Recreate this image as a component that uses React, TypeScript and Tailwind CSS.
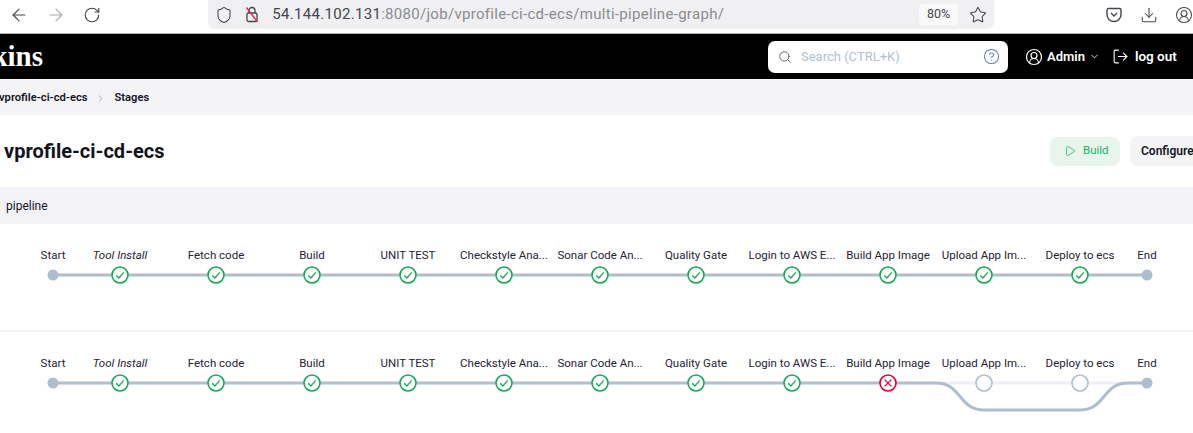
import { ArrowLeft, ArrowRight, ChevronDown, ChevronRight, CircleHelp, CircleUserRound, Download, LogOut, Play, RotateCw, Search, Shield, Star } from "lucide-react";

const stages = [
  { name: "Tool Install", x: 120, italic: true },
  { name: "Fetch code", x: 216 },
  { name: "Build", x: 312 },
  { name: "UNIT TEST", x: 408 },
  { name: "Checkstyle Ana...", x: 504 },
  { name: "Sonar Code An...", x: 600 },
  { name: "Quality Gate", x: 696 },
  { name: "Login to AWS E...", x: 792 },
  { name: "Build App Image", x: 888 },
  { name: "Upload App Im...", x: 984 },
  { name: "Deploy to ecs", x: 1080 },
];

function Label({ x, italic, children }: { x: number; italic?: boolean; children: string }) {
  return (
    <span
      className={`absolute top-0 -translate-x-1/2 whitespace-nowrap text-[11.5px] leading-[18px] text-[#1f2333] ${italic ? "italic" : ""}`}
      style={{ left: x }}
    >
      {children}
    </span>
  );
}

function Ok({ x }: { x: number }) {
  return (
    <g transform={`translate(${x} 29)`}>
      <circle r="8" fill="#fff" stroke="#1ba853" strokeWidth="1.6" />
      <path d="M-3.8 0.3 L-1.1 3 L3.8 -2.6" fill="none" stroke="#1ba853" strokeWidth="1.3" />
    </g>
  );
}

function Graph({ failed }: { failed?: boolean }) {
  return (
    <div className="relative h-[70px]">
      <svg className="absolute left-0 top-0" width="1193" height="70" fill="none">
        {failed ? (
          <>
            <path d="M936 29H1128" stroke="#eceff4" strokeWidth="3" />
            <path d="M53 29H936C962 29 958 56 984 56H1080C1106 56 1102 29 1128 29H1147" stroke="#b0bccf" strokeWidth="3" />
          </>
        ) : (
          <path d="M53 29H1147" stroke="#b0bccf" strokeWidth="3" />
        )}
        <circle cx="53" cy="29" r="5.5" fill="#b0bccf" />
        <circle cx="1147" cy="29" r="5.5" fill="#b0bccf" />
        {stages.map((s) => {
          if (failed && s.x === 888)
            return (
              <g key={s.x} transform={`translate(${s.x} 29)`}>
                <circle r="8" fill="#fff" stroke="#e6002d" strokeWidth="1.6" />
                <path d="M-3.4 -3.4L3.4 3.4M3.4 -3.4L-3.4 3.4" stroke="#e6002d" strokeWidth="1.3" />
              </g>
            );
          if (failed && s.x > 888)
            return <circle key={s.x} cx={s.x} cy="29" r="8" fill="#fff" stroke="#b0bccf" strokeWidth="1.6" />;
          return <Ok key={s.x} x={s.x} />;
        })}
      </svg>
      <Label x={53}>Start</Label>
      {stages.map((s) => (
        <Label key={s.x} x={s.x} italic={s.italic}>
          {s.name}
        </Label>
      ))}
      <Label x={1147}>End</Label>
    </div>
  );
}

export default function App() {
  return (
    <div className="h-[433px] w-[1193px] overflow-hidden bg-white font-['Roboto',sans-serif] text-[#14141f]">
      {/* browser chrome */}
      <div className="flex h-[34px] items-start border-b border-[#b5b5b5] bg-white text-[#45454d]">
        <div className="flex h-[29px] w-[210px] items-center">
          <ArrowLeft size={20} strokeWidth={1.4} className="ml-[9px]" />
          <ArrowRight size={20} strokeWidth={1.4} className="ml-[17px] text-[#a8a8ae]" />
          <RotateCw size={18} strokeWidth={1.5} className="ml-[17px]" />
        </div>
        <div className="flex h-[29px] w-[792px] items-center rounded-b-[6px] bg-[#f0f0f2] pr-[7px]">
          <Shield size={18} strokeWidth={1.4} className="ml-[7px]" />
          <svg className="ml-[11px]" width="16" height="17" viewBox="0 0 16 17" fill="none">
            <path d="M5 7V4.5a3 3 0 0 1 6 0V7" stroke="#45454d" strokeWidth="1.3" />
            <rect x="3" y="7" width="10" height="8.5" rx="1.5" stroke="#45454d" strokeWidth="1.3" />
            <path d="M2.5 1.5L13.5 16" stroke="#e22850" strokeWidth="1.4" />
          </svg>
          <span className="ml-[12px] text-[15px] tracking-[0.3px]">
            54.144.102.131<span className="text-[#8b8b90]">:8080/job/vprofile-ci-cd-ecs/multi-pipeline-graph/</span>
          </span>
          <span className="ml-auto flex h-[21px] w-[39px] items-center justify-center rounded bg-[#f9f9fa] text-[12.5px]">80%</span>
          <Star size={18} strokeWidth={1.4} className="ml-[11px]" />
        </div>
        <div className="flex h-[29px] flex-1 items-center">
          <svg className="ml-[112px]" width="16" height="16" viewBox="0 0 16 16" fill="none" stroke="#45454d" strokeWidth="1.4">
            <path d="M2.5 1.5h11A1.5 1.5 0 0 1 15 3v4.5a7 7 0 0 1-14 0V3a1.5 1.5 0 0 1 1.5-1.5Z" />
            <path d="M5 6l3 3 3-3" />
          </svg>
          <Download size={18} strokeWidth={1.4} className="ml-[18px]" />
          <CircleUserRound size={18} strokeWidth={1.4} className="ml-[17px] shrink-0" />
        </div>
      </div>

      {/* jenkins header */}
      <header className="flex h-[45px] items-center bg-black text-white">
        <div className="flex w-[43px] shrink-0 justify-end overflow-hidden">
          <span className="whitespace-nowrap font-['Liberation_Serif',serif] text-[29px] font-bold leading-none">Jenkins</span>
        </div>
        <div className="ml-[725px] flex h-[32px] w-[240px] shrink-0 items-center rounded-[7px] bg-white">
          <Search size={14} strokeWidth={1.6} className="ml-[10px] text-[#55555f]" />
          <span className="ml-[9px] text-[13px] text-[#aebfd8]">Search (CTRL+K)</span>
          <CircleHelp size={17} strokeWidth={1.5} className="ml-auto mr-[8px] text-[#5f83b1]" />
        </div>
        <CircleUserRound size={18} strokeWidth={1.6} className="ml-[17px] shrink-0" />
        <span className="ml-[4px] text-[13px] font-semibold">Admin</span>
        <ChevronDown size={11} strokeWidth={1.8} className="ml-[4px] shrink-0" />
        <LogOut size={17} strokeWidth={1.5} className="ml-[12px] shrink-0" />
        <span className="ml-[6px] text-[13.5px] font-semibold">log out</span>
      </header>

      {/* breadcrumb */}
      <nav className="flex h-[36px] items-center bg-[#f4f4f7] pt-[2px] text-[11.2px] font-semibold">
        <span className="ml-[-1px]">vprofile-ci-cd-ecs</span>
        <ChevronRight size={11} strokeWidth={1.5} className="ml-[7px] text-[#8e9099]" />
        <span className="ml-[9px]">Stages</span>
      </nav>

      {/* title */}
      <div className="flex h-[72px] items-center overflow-hidden">
        <h1 className="ml-[4px] text-[20px] font-bold">vprofile-ci-cd-ecs</h1>
        <button className="ml-auto flex h-[29px] w-[70px] shrink-0 items-center rounded-[8px] bg-[#e7f5ec] pl-[14px] text-[11.5px] font-normal text-[#23b065]">
          <Play size={12} strokeWidth={1.5} />
          <span className="ml-[7px]">Build</span>
        </button>
        <button className="ml-[10px] mr-[-10px] flex h-[30px] w-[73px] shrink-0 items-center rounded-[8px] bg-[#f4f4f7] pl-[11px] text-[12px] font-semibold">
          Configure
        </button>
      </div>

      {/* runs */}
      <div className="flex h-[37px] items-center bg-[#f2f2f7] pl-[6px] text-[12px] font-normal">pipeline</div>
      <div className="h-[108px] border-b-2 border-[#f3f3f7] pt-[22px]">
        <Graph />
      </div>
      <div className="pt-[22px]">
        <Graph failed />
      </div>
    </div>
  );
}
